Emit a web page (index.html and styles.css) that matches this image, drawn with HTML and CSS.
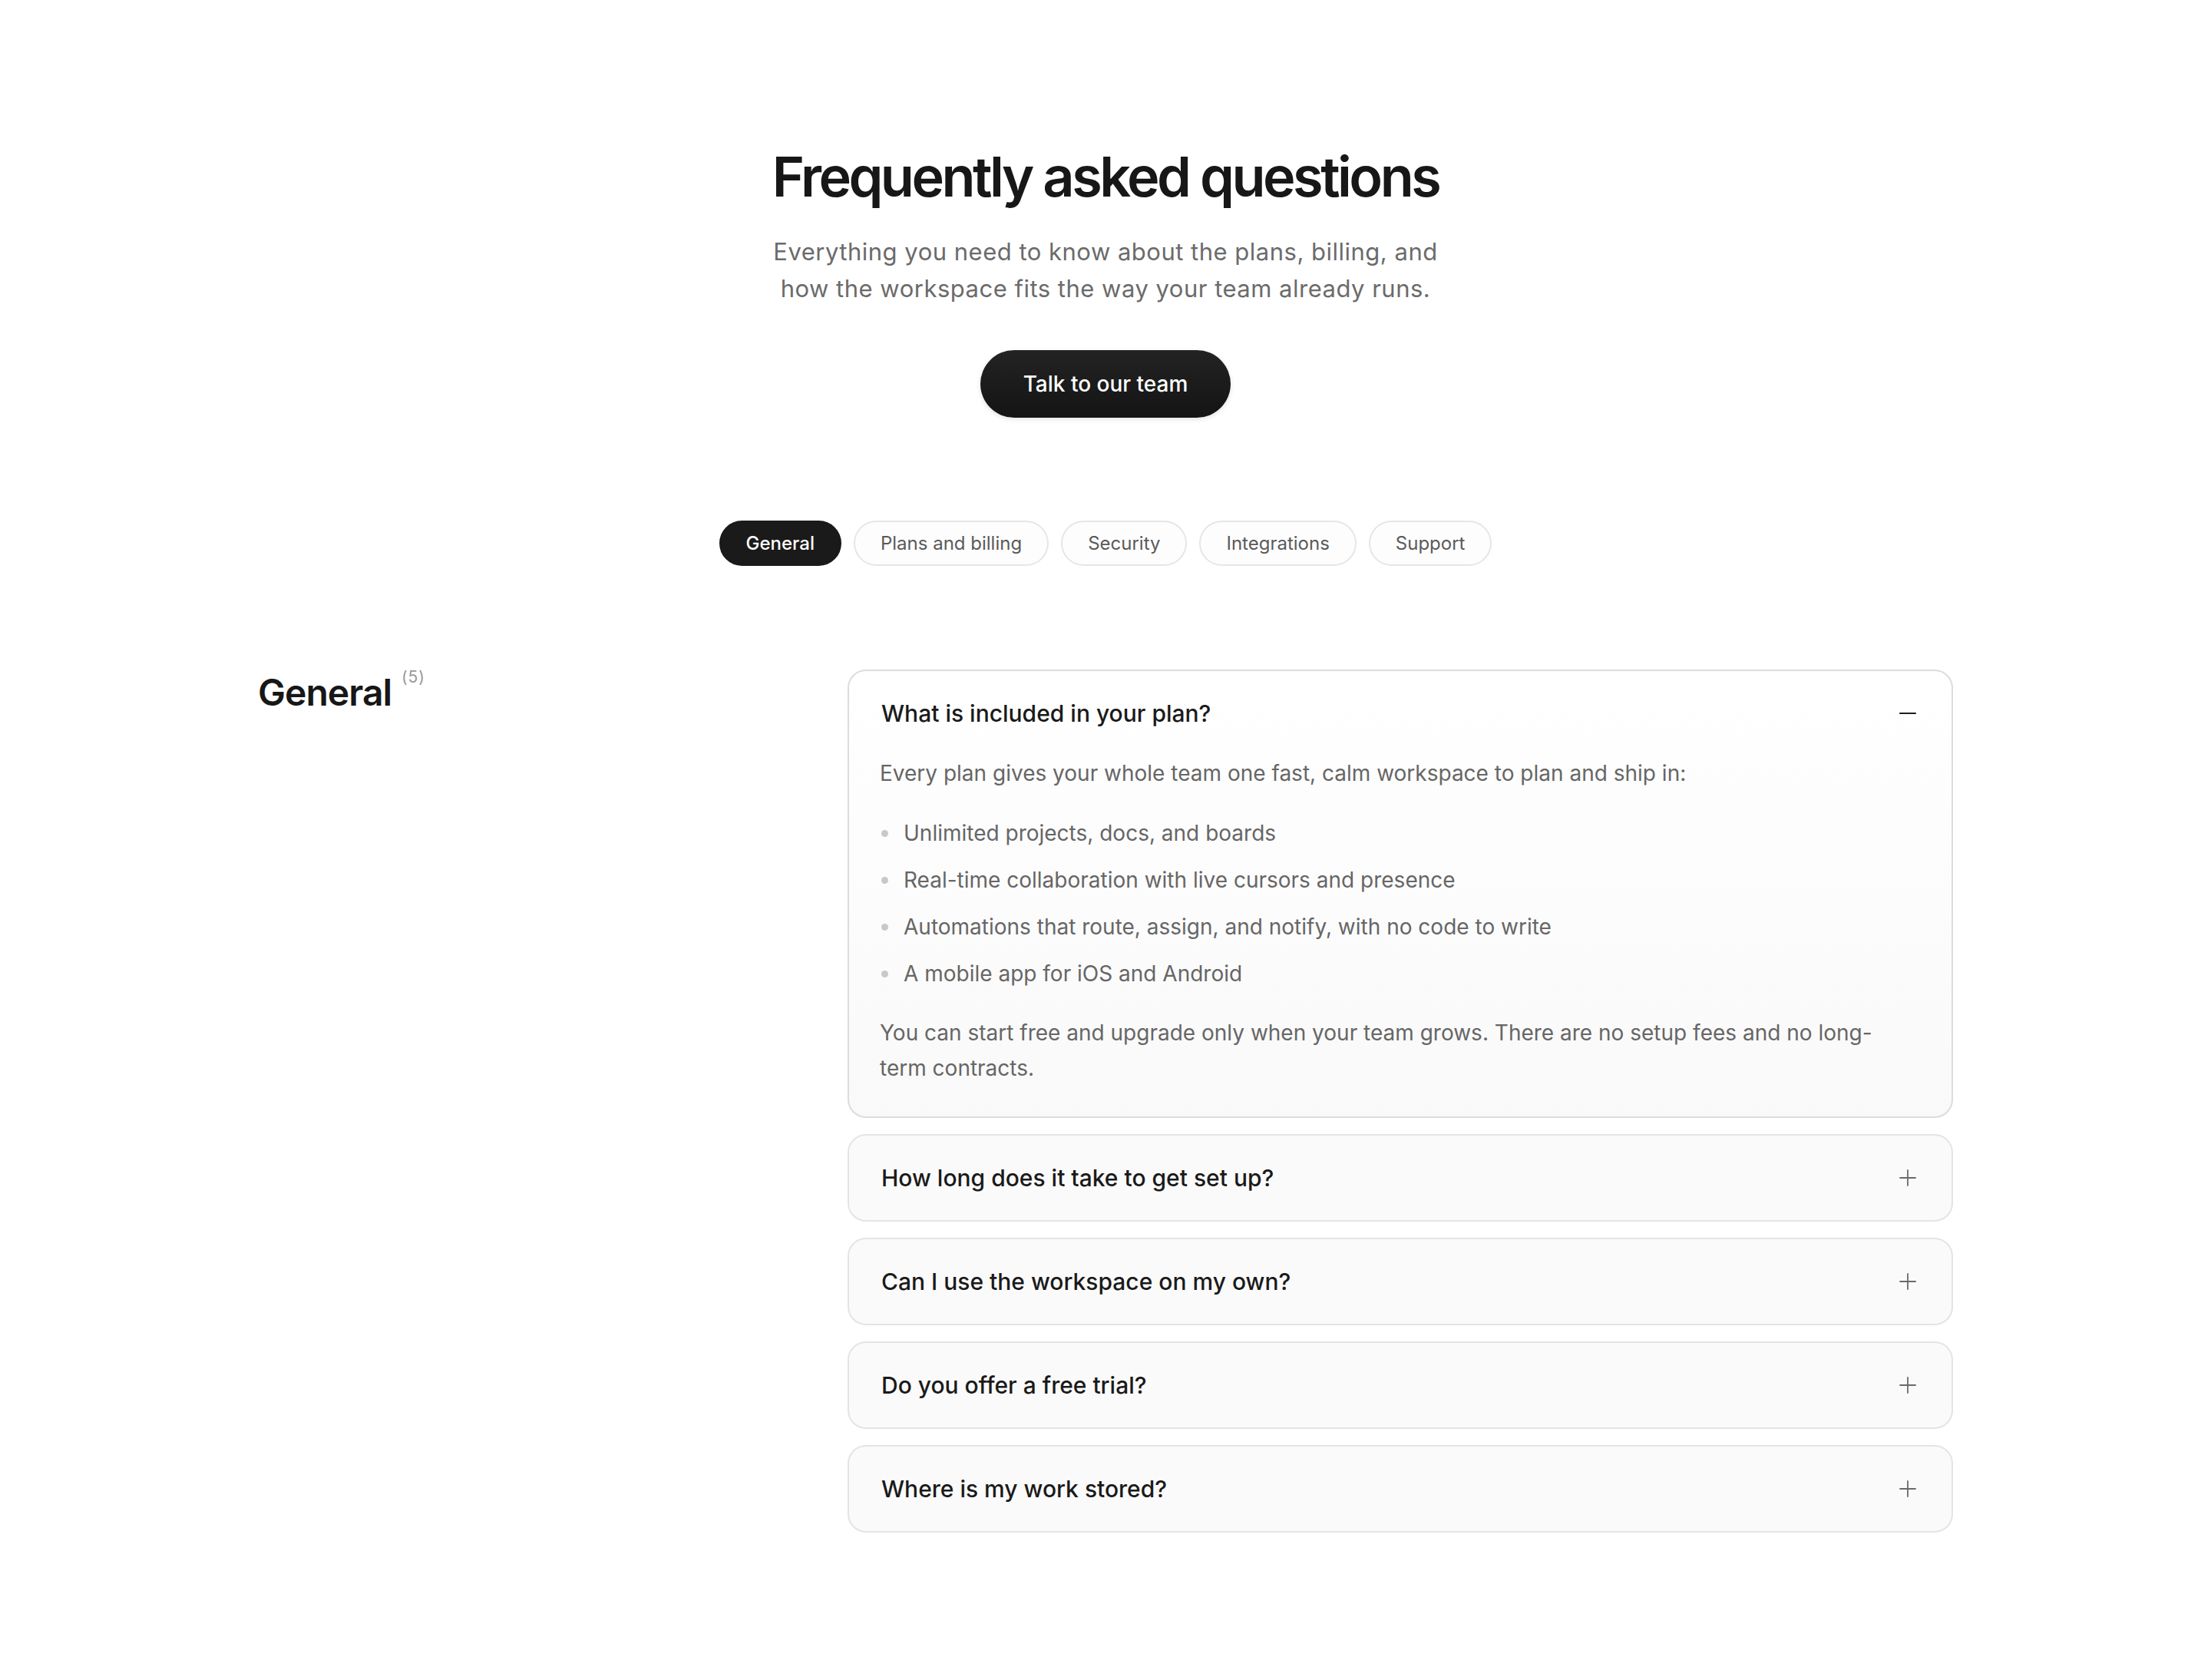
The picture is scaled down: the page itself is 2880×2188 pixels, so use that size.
FILE: index.html
```html
<!DOCTYPE html>
<html lang="en">
<head>
<meta charset="utf-8">
<title>FAQ</title>
<link rel="stylesheet" href="styles.css">
</head>
<body>
<main class="page">
  <header class="hero">
    <h1 class="title">Frequently asked questions</h1>
    <p class="subtitle">Everything you need to know about the plans, billing, and how the workspace fits the way your team already runs.</p>
    <a class="cta" href="#">Talk to our team</a>
  </header>

  <nav class="tabs">
    <button class="tab tab-active">General</button>
    <button class="tab">Plans and billing</button>
    <button class="tab">Security</button>
    <button class="tab">Integrations</button>
    <button class="tab">Support</button>
  </nav>

  <section class="faq">
    <div class="faq-side">
      <h2 class="faq-heading">General</h2>
      <span class="faq-count">(5)</span>
    </div>
    <div class="cards">
      <div class="card card-open">
        <div class="card-head">
          <span class="question">What is included in your plan?</span>
          <svg class="icon icon-dark" width="22" height="22" viewBox="0 0 22 22"><path d="M1 11h20" stroke="currentColor" stroke-width="2.2" stroke-linecap="round"/></svg>
        </div>
        <div class="card-body">
          <p class="answer">Every plan gives your whole team one fast, calm workspace to plan and ship in:</p>
          <ul class="answer-list">
            <li>Unlimited projects, docs, and boards</li>
            <li>Real-time collaboration with live cursors and presence</li>
            <li>Automations that route, assign, and notify, with no code to write</li>
            <li>A mobile app for iOS and Android</li>
          </ul>
          <p class="answer">You can start free and upgrade only when your team grows. There are no setup fees and no long-term contracts.</p>
        </div>
      </div>
      <div class="card">
        <div class="card-head">
          <span class="question">How long does it take to get set up?</span>
          <svg class="icon" width="22" height="22" viewBox="0 0 22 22"><path d="M1 11h20M11 1v20" stroke="currentColor" stroke-width="1.8" stroke-linecap="round"/></svg>
        </div>
      </div>
      <div class="card">
        <div class="card-head">
          <span class="question">Can I use the workspace on my own?</span>
          <svg class="icon" width="22" height="22" viewBox="0 0 22 22"><path d="M1 11h20M11 1v20" stroke="currentColor" stroke-width="1.8" stroke-linecap="round"/></svg>
        </div>
      </div>
      <div class="card">
        <div class="card-head">
          <span class="question">Do you offer a free trial?</span>
          <svg class="icon" width="22" height="22" viewBox="0 0 22 22"><path d="M1 11h20M11 1v20" stroke="currentColor" stroke-width="1.8" stroke-linecap="round"/></svg>
        </div>
      </div>
      <div class="card">
        <div class="card-head">
          <span class="question">Where is my work stored?</span>
          <svg class="icon" width="22" height="22" viewBox="0 0 22 22"><path d="M1 11h20M11 1v20" stroke="currentColor" stroke-width="1.8" stroke-linecap="round"/></svg>
        </div>
      </div>
    </div>
  </section>
</main>
</body>
</html>
```

FILE: styles.css
```css
* { box-sizing: border-box; }

html, body {
  margin: 0;
  padding: 0;
  background: #ffffff;
}

body {
  font-family: Inter, "Noto Sans", "Liberation Sans", sans-serif;
  color: #171717;
}

.page {
  padding: 190px 0 193px;
}

.hero {
  display: flex;
  flex-direction: column;
  align-items: center;
  text-align: center;
}

.title {
  margin: 0;
  font-size: 72px;
  line-height: 1.1;
  font-weight: 600;
  letter-spacing: -0.049em;
  color: #171717;
}

.subtitle {
  margin: 35px 0 0;
  max-width: 900px;
  font-size: 31px;
  line-height: 48px;
  letter-spacing: 0.016em;
  color: #6b6b6b;
  font-weight: 400;
}

.cta {
  margin-top: 56px;
  height: 88px;
  padding: 0 56px;
  display: inline-flex;
  align-items: center;
  justify-content: center;
  border-radius: 999px;
  background: linear-gradient(180deg, #232323 0%, #141414 100%);
  color: #ffffff;
  font-size: 28px;
  font-weight: 500;
  text-decoration: none;
  box-shadow: 0 2px 6px rgba(0, 0, 0, 0.12);
}

.tabs {
  margin-top: 134px;
  display: flex;
  justify-content: center;
  gap: 16px;
}

.tab {
  height: 59px;
  padding: 0 33px;
  border: 2px solid #e6e6e6;
  border-radius: 999px;
  background: #fdfdfd;
  color: #5a5a5a;
  font-family: inherit;
  font-size: 24px;
  font-weight: 400;
  cursor: pointer;
}

.tab-active {
  background: #1a1a1a;
  border-color: #1a1a1a;
  color: #ffffff;
  font-weight: 500;
}

.faq {
  width: 2208px;
  margin: 135px auto 0;
  display: grid;
  grid-template-columns: 1fr 1440px;
}

.faq-side {
  display: flex;
  align-items: flex-start;
  gap: 13px;
}

.faq-heading {
  margin: 0;
  font-size: 48px;
  line-height: 60px;
  font-weight: 600;
  letter-spacing: -0.02em;
  color: #171717;
}

.faq-count {
  font-size: 21px;
  line-height: 20px;
  color: #999999;
  letter-spacing: 0.04em;
  margin-top: 0;
}

.cards {
  display: flex;
  flex-direction: column;
  gap: 21px;
}

.card {
  border: 2px solid #e4e4e4;
  border-radius: 24px;
  background: #fafafa;
}

.card-open {
  border-color: #dcdcdc;
  background: linear-gradient(180deg, #ffffff 0%, #f9f9f9 100%);
}

.card-head {
  height: 110px;
  display: flex;
  align-items: center;
  justify-content: space-between;
  padding: 0 46px 0 42px;
}

.question {
  font-size: 30px;
  font-weight: 500;
  letter-spacing: 0;
  color: #1a1a1a;
}

.icon {
  color: #6a6a6a;
  flex-shrink: 0;
}

.icon-dark {
  color: #1f1f1f;
}

.card-body {
  padding: 0 46px 40px 40px;
}

.answer {
  margin: 0;
  font-size: 28px;
  line-height: 46px;
  color: #666666;
}

.answer-list {
  list-style: none;
  margin: 32px 0 31px;
  padding: 0;
  display: flex;
  flex-direction: column;
  gap: 15px;
}

.answer-list li {
  position: relative;
  padding-left: 31px;
  font-size: 28px;
  line-height: 46px;
  color: #666666;
}

.answer-list li::before {
  content: "";
  position: absolute;
  left: 2px;
  top: 19px;
  width: 9px;
  height: 9px;
  border-radius: 50%;
  background: #c8c8c8;
}
```
